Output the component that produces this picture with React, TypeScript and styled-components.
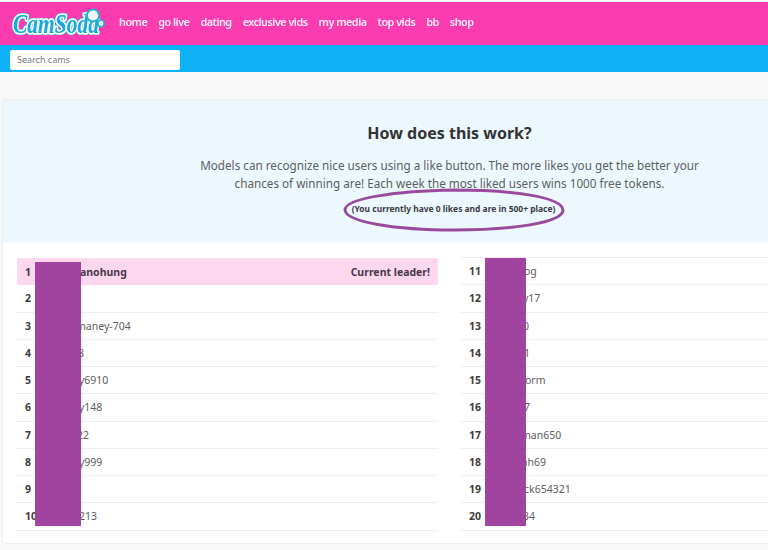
import React from "react";
import styled, { createGlobalStyle } from "styled-components";

const Global = createGlobalStyle`
  html, body { margin: 0; padding: 0; background: #f8f8f8; }
  body { font-family: "Noto Sans", "Liberation Sans", sans-serif; color: #444; overflow: hidden; }
`;
const Page = styled.div`
  width: 768px;
  height: 550px;
  overflow: hidden;
  display: flex;
  flex-direction: column;
  padding-top: 2px;
  box-sizing: border-box;
`;
const TopBar = styled.header`
  height: 43px;
  flex: none;
  background: #fb3cb0;
  display: flex;
  align-items: center;
  padding-left: 9px;
`;
const LogoWrap = styled.svg`
  width: 99px;
  height: 33px;
  flex: none;
  margin-right: 11px;
  overflow: visible;
`;
const LogoText = styled.text`
  font-family: "Liberation Serif", serif;
  font-style: italic;
  font-weight: 700;
  font-size: 27px;
  fill: #1ba6dc;
  stroke: #f4fdff;
  stroke-width: 3.6px;
  stroke-linejoin: round;
  paint-order: stroke;
  filter: drop-shadow(0 0 0.7px #22b2d2) drop-shadow(0 0 0.7px #22b2d2) drop-shadow(0 0 0.7px #22b2d2) drop-shadow(0 0 0.7px #22b2d2);
`;
const Nav = styled.nav`
  display: flex;
  gap: 11px;
  margin-top: -4px;
`;
const NavLink = styled.a`
  font-size: 10.8px;
  font-weight: 600;
  color: #fff;
  letter-spacing: -0.49px;
  white-space: nowrap;
  opacity: 0.92;
`;
const SearchBar = styled.div`
  height: 27px;
  flex: none;
  box-sizing: border-box;
  background: #0eb0f6;
  display: flex;
  align-items: center;
  padding: 3px 10px 0;
`;
const SearchInput = styled.div`
  width: 163px;
  height: 20px;
  line-height: 20px;
  background: #fff;
  border-radius: 2px;
  padding-left: 7px;
  font-size: 9px;
  color: #777;
`;
const Card = styled.main`
  margin: 27px 0 0 2px;
  height: 445px;
  flex: none;
  background: #fff;
  border: 1px solid #eee;
  border-right: none;
  border-radius: 3px 0 0 3px;
  box-sizing: border-box;
  display: flex;
  flex-direction: column;
`;
const Intro = styled.section`
  position: relative;
  height: 143px;
  flex: none;
  background: #edf8fe;
  text-align: center;
  padding: 21px 0 0 128px;
  box-sizing: border-box;
`;
const Title = styled.h2`
  margin: 0 0 12px;
  font-size: 16px;
  line-height: 24px;
  font-weight: 700;
  color: #333;
`;
const Lead = styled.p`
  margin: 0 auto;
  font-size: 11.7px;
  line-height: 17.5px;
  width: 520px;
  color: #5a5f60;
`;
const Status = styled.p`
  margin: 11px 0 0;
  padding-left: 8px;
  font-size: 8.45px;
  line-height: 12px;
  font-weight: 700;
  color: #3a3a44;
`;
const Ellipse = styled.svg`
  position: absolute;
  left: 340px;
  top: 88px;
  width: 222px;
  height: 44px;
`;
const Lists = styled.div`
  display: flex;
  gap: 23px;
  padding: 15px 0 0 14px;
`;
const Column = styled.div<{ $width: number }>`
  position: relative;
  flex: none;
  width: ${(p) => p.$width}px;
`;
const Row = styled.div<{ $leader?: boolean }>`
  display: flex;
  align-items: center;
  height: 27.25px;
  box-sizing: border-box;
  font-size: 10.5px;
  padding-left: 8px;
  border-bottom: ${(p) => (p.$leader ? "none" : "1px solid #ececec")};
  background: ${(p) => (p.$leader ? "#fcd7ee" : "transparent")};
  font-weight: ${(p) => (p.$leader ? 700 : 400)};
  color: ${(p) => (p.$leader ? "#4a3648" : "#5c5c5c")};
`;
const Rank = styled.span`
  font-weight: 700;
  color: #3d3d3d;
  flex: none;
`;
const Name = styled.span<{ $offset: number }>`
  position: absolute;
  left: ${(p) => p.$offset}px;
`;
const Leader = styled.span`
  margin-left: auto;
  padding-right: 8px;
  font-weight: 700;
`;
const ColumnTop = styled.div`
  border-top: 1px solid #ececec;
  margin-top: -1px;
`;
const Redaction = styled.div<{ $left: number; $top: number; $width: number; $height: number }>`
  position: absolute;
  left: ${(p) => p.$left}px;
  top: ${(p) => p.$top}px;
  width: ${(p) => p.$width}px;
  height: ${(p) => p.$height}px;
  background: #a044a0;
`;

const left = [
  ["1", "anohung", 63],
  ["2", "", 63],
  ["3", "maney-704", 59],
  ["4", "8", 61],
  ["5", "y6910", 62],
  ["6", "y148", 62],
  ["7", "22", 60],
  ["8", "y999", 62],
  ["9", "", 63],
  ["10", "213", 62],
] as const;
const right = [
  ["11", "og", 63],
  ["12", "y17", 62],
  ["13", "0", 62],
  ["14", "1", 63],
  ["15", "orm", 64],
  ["16", "7", 63],
  ["17", "man650", 60],
  ["18", "nh69", 60],
  ["19", "ck654321", 63],
  ["20", "34", 62],
] as const;

const navItems = ["home", "go live", "dating", "exclusive vids", "my media", "top vids", "bb", "shop"];

function Logo() {
  return (
    <LogoWrap viewBox="0 0 99 33" aria-label="CamSoda">
      <LogoText x="4" y="25.5" textLength="86" lengthAdjust="spacingAndGlyphs">CamSoda</LogoText>
      <circle cx="84" cy="8.5" r="6" fill="#f4fdff" stroke="#22b2d2" strokeWidth="1.8" />
      <circle cx="92" cy="16.5" r="3.2" fill="#f4fdff" stroke="#22b2d2" strokeWidth="1.6" />
    </LogoWrap>
  );
}

export default function App() {
  return (
    <Page>
      <Global />
      <TopBar>
        <Logo />
        <Nav>
          {navItems.map((n) => (
            <NavLink key={n}>{n}</NavLink>
          ))}
        </Nav>
      </TopBar>
      <SearchBar>
        <SearchInput>Search cams</SearchInput>
      </SearchBar>
      <Card>
        <Intro>
          <Title>How does this work?</Title>
          <Lead>
            Models can recognize nice users using a like button. The more likes you get the better your chances of
            winning are! Each week the most liked users wins 1000 free tokens.
          </Lead>
          <Status>(You currently have 0 likes and are in 500+ place)</Status>
          <Ellipse viewBox="0 0 222 44">
            <path d="M111 2 C170 2 219 9 220 22 C220 35 168 42 111 42 C52 42 3 34 2 22 C2 10 54 3 111 2Z" fill="none" stroke="#9a4a9e" strokeWidth="3" />
          </Ellipse>
        </Intro>
        <Lists>
          <Column $width={421}>
            {left.map(([rank, name, off], i) => (
              <Row key={rank} $leader={i === 0}>
                <Rank>{rank}</Rank>
                <Name $offset={off}>{name}</Name>
                {i === 0 && <Leader>Current leader!</Leader>}
              </Row>
            ))}
            <Redaction $left={18} $top={4} $width={46} $height={264} />
          </Column>
          <Column $width={310}>
            <ColumnTop />
            {right.map(([rank, name, off]) => (
              <Row key={rank}>
                <Rank>{rank}</Rank>
                <Name $offset={off}>{name}</Name>
              </Row>
            ))}
            <Redaction $left={24} $top={0} $width={41} $height={268} />
          </Column>
        </Lists>
      </Card>
    </Page>
  );
}
